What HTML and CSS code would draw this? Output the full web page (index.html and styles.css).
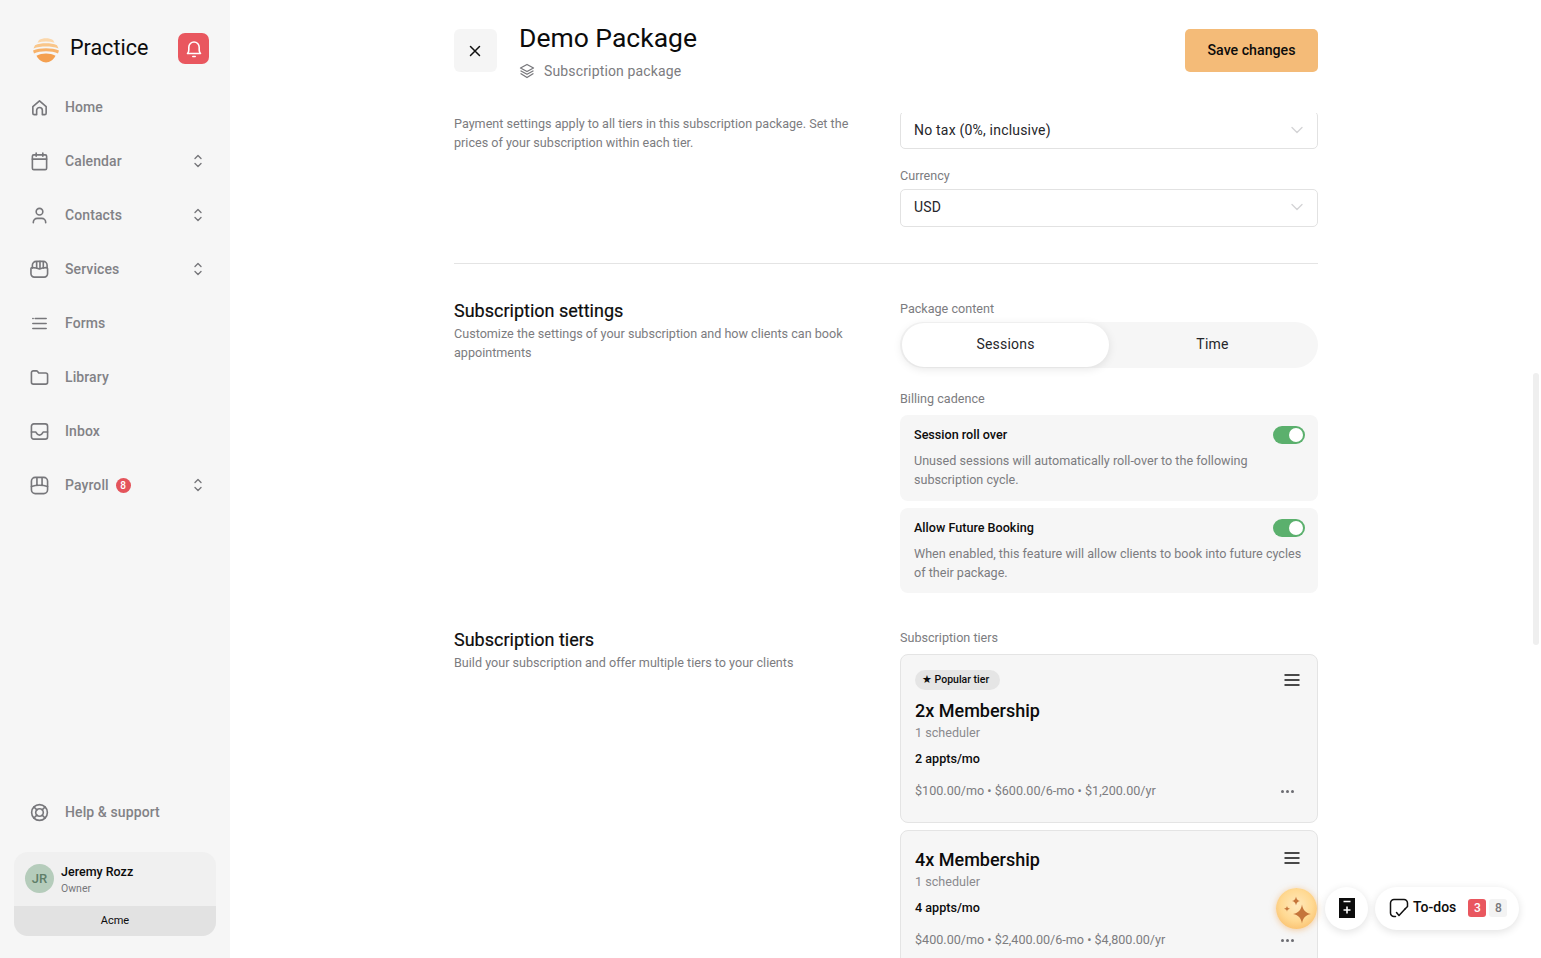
FILE: index.html
```html
<!DOCTYPE html>
<html lang="en">

<head>
    <meta charset="UTF-8">
    <meta name="viewport" content="width=device-width, initial-scale=1.0">
    <title>Demo Package</title>
    <link rel="stylesheet" href="styles.css">
</head>

<body>
    <aside class="sidebar">
        <div class="brand">
            <svg class="brand-logo" width="28" height="26" viewBox="0 0 28 26">
                <path d="M7 3C11 .8 17 .8 21 3L22.500 5.800C17 4 11 4 5.500 5.800Z" fill="#fbd7ab" />
                <path d="M3 8.200C9 5.600 19 5.600 25 8.200L26.500 11.400C19 8.800 9 8.800 1.500 11.400Z" fill="#f9c68a" />
                <path d="M1 13.600C8 10.600 20 10.600 27 13.600L26 16.600C20 13.600 8 13.600 2 16.600Z" fill="#f7b26a" />
                <path d="M4.500 18.800C10 15.800 18 15.800 23.500 18.800C21 23.500 17.500 25.500 14 25.500C10.500 25.500 7 23.500 4.500 18.800Z" fill="#f4a050" />
            </svg>
            <span class="brand-name">Practice</span>
            <button class="bell">
                <svg width="20" height="20" viewBox="0 0 20 20" fill="none" stroke="#fff" stroke-width="1.600"
                    stroke-linecap="round" stroke-linejoin="round">
                    <path d="M3.500 14.500h13c-.9-1-1.300-2-1.300-3.600V8.200a5.200 5.200 0 0 0-10.400 0v2.700c0 1.600-.4 2.600-1.300 3.600z" />
                    <path d="M8.800 17.500h2.400" />
                </svg>
            </button>
        </div>

        <nav class="nav">
            <a class="nav-item">
                <svg class="nav-icon" viewBox="0 0 20 20">
                    <path d="M3 9 10 3l7 6v7a1.500 1.500 0 0 1-1.500 1.500H13v-4.500a3 3 0 0 0-6 0v4.500H4.500A1.500 1.500 0 0 1 3 16z" />
                </svg>
                <span>Home</span>
            </a>
            <a class="nav-item">
                <svg class="nav-icon" viewBox="0 0 20 20">
                    <rect x="2.500" y="3" width="15" height="15.500" rx="1.500" />
                    <path d="M2.500 7.500h15M6.500 1v3.500M13.500 1v3.500" />
                </svg>
                <span>Calendar</span>
                <svg class="updown" viewBox="0 0 10 14">
                    <path d="M2 4.500 5 1.500 8 4.500M2 9.500 5 12.500 8 9.500" />
                </svg>
            </a>
            <a class="nav-item">
                <svg class="nav-icon" viewBox="0 0 20 20">
                    <circle cx="10" cy="6" r="3.500" />
                    <path d="M3.500 17.500v-.5a4 4 0 0 1 4-4h5a4 4 0 0 1 4 4v.5" />
                </svg>
                <span>Contacts</span>
                <svg class="updown" viewBox="0 0 10 14">
                    <path d="M2 4.500 5 1.500 8 4.500M2 9.500 5 12.500 8 9.500" />
                </svg>
            </a>
            <a class="nav-item">
                <svg class="nav-icon" viewBox="0 0 20 20">
                    <path d="M2.500 8.500V5.500a4 4 0 0 1 4-4h7.500a4 4 0 0 1 4 4v3" />
                    <path d="M1 9c0-1 .8-1 1.500-1 3 0 5.500.5 7.500 1.500 2-1 4.500-1.500 7-1.500 .7 0 1.500 0 1.500 1v5.500a3.500 3.500 0 0 1-3.500 3.500h-10.500A3.500 3.500 0 0 1 1 14.500z" />
                    <path d="M7 1.800v6.700M10.500 1.500v7.500M14 1.800v6.700" />
                </svg>
                <span>Services</span>
                <svg class="updown" viewBox="0 0 10 14">
                    <path d="M2 4.500 5 1.500 8 4.500M2 9.500 5 12.500 8 9.500" />
                </svg>
            </a>
            <a class="nav-item">
                <svg class="nav-icon" viewBox="0 0 20 20">
                    <path d="M5.500 4.700h11.500M3 10h14M3 15.300h14M3 4.700h.3" />
                </svg>
                <span>Forms</span>
            </a>
            <a class="nav-item">
                <svg class="nav-icon" viewBox="0 0 20 20">
                    <path d="M1.500 5A2 2 0 0 1 3.500 3h3.300a1.500 1.500 0 0 1 1.200.6L9.200 5.200h7.300a2 2 0 0 1 2 2v7.800a2 2 0 0 1-2 2h-13a2 2 0 0 1-2-2z" />
                </svg>
                <span>Library</span>
            </a>
            <a class="nav-item">
                <svg class="nav-icon" viewBox="0 0 20 20">
                    <rect x="1.500" y="2" width="17" height="16" rx="2.500" />
                    <path d="M1.500 10.500H6c.6 0 .8 3.300 4 3.300s3.400-3.300 4-3.300h4.500" />
                </svg>
                <span>Inbox</span>
            </a>
            <a class="nav-item">
                <svg class="nav-icon" viewBox="0 0 20 20">
                    <rect x="1.500" y="1.500" width="17" height="17" rx="4" />
                    <path d="M1.500 11c3-1 5.500-1.300 8.500-1.300s5.500.3 8.500 1.300M7.300 2v7.800M12.700 2v7.800" />
                </svg>
                <span>Payroll</span>
                <span class="nav-badge">8</span>
                <svg class="updown" viewBox="0 0 10 14">
                    <path d="M2 4.500 5 1.500 8 4.500M2 9.500 5 12.500 8 9.500" />
                </svg>
            </a>
        </nav>

        <a class="nav-item help">
            <svg class="nav-icon" viewBox="0 0 20 20">
                <circle cx="10" cy="10" r="8.300" />
                <circle cx="10" cy="10" r="4" />
                <path d="M4.200 4.200 7.200 7.200M15.800 4.200l-3 3M4.200 15.800l3-3M15.800 15.800l-3-3" />
            </svg>
            <span>Help &amp; support</span>
        </a>

        <div class="user-card">
            <div class="user-row">
                <div class="avatar">JR</div>
                <div class="user-text">
                    <div class="user-name">Jeremy Rozz</div>
                    <div class="user-role">Owner</div>
                </div>
            </div>
            <div class="user-org">Acme</div>
        </div>
    </aside>

    <main class="main">
        <header class="page-header">
            <button class="close-btn">
                <svg width="14" height="14" viewBox="0 0 14 14" fill="none" stroke="#111" stroke-width="1.500"
                    stroke-linecap="round">
                    <path d="M2.500 2.500l9 9M11.500 2.500l-9 9" />
                </svg>
            </button>
            <div class="title-block">
                <h1>Demo Package</h1>
                <div class="subtitle">
                    <svg width="16" height="16" viewBox="0 0 16 16" fill="none" stroke="#77777b" stroke-width="1.300"
                        stroke-linejoin="round" stroke-linecap="round">
                        <path d="M8 1.500 14.500 5 8 8.500 1.500 5z" />
                        <path d="M2 8l6 3.300L14 8M2 10.800l6 3.700 6-3.700" />
                    </svg>
                    <span>Subscription package</span>
                </div>
            </div>
            <button class="save-btn">Save changes</button>
        </header>

        <div class="content">
            <section class="section section-first">
                <div class="section-left">
                    <p class="section-desc pad-top">Payment settings apply to all tiers in this subscription package. Set the prices of your subscription within each tier.</p>
                </div>
                <div class="section-right">
                    <div class="select">
                        <span>No tax (0%, inclusive)</span>
                        <svg class="chevron" viewBox="0 0 12 8"><path d="M1 1.500 6 6.500 11 1.500" /></svg>
                    </div>
                    <label class="field-label label-spaced">Currency</label>
                    <div class="select select-tight">
                        <span>USD</span>
                        <svg class="chevron" viewBox="0 0 12 8"><path d="M1 1.500 6 6.500 11 1.500" /></svg>
                    </div>
                </div>
            </section>

            <hr class="divider">

            <section class="section section-settings">
                <div class="section-left">
                    <h2>Subscription settings</h2>
                    <p class="section-desc">Customize the settings of your subscription and how clients can book appointments</p>
                </div>
                <div class="section-right">
                    <label class="field-label">Package content</label>
                    <div class="segmented">
                        <div class="segment active">Sessions</div>
                        <div class="segment">Time</div>
                    </div>
                    <label class="field-label label-billing">Billing cadence</label>
                    <div class="option-card">
                        <div class="option-head">
                            <span class="option-title">Session roll over</span>
                            <span class="switch"></span>
                        </div>
                        <p class="option-desc">Unused sessions will automatically roll-over to the following subscription cycle.</p>
                    </div>
                    <div class="option-card">
                        <div class="option-head">
                            <span class="option-title">Allow Future Booking</span>
                            <span class="switch"></span>
                        </div>
                        <p class="option-desc">When enabled, this feature will allow clients to book into future cycles of their package.</p>
                    </div>
                </div>
            </section>

            <section class="section section-tiers">
                <div class="section-left">
                    <h2>Subscription tiers</h2>
                    <p class="section-desc">Build your subscription and offer multiple tiers to your clients</p>
                </div>
                <div class="section-right">
                    <label class="field-label label-tiers">Subscription tiers</label>
                    <div class="tier-card">
                        <div class="tier-top">
                            <span class="tier-pill">★ Popular tier</span>
                            <svg class="tier-menu" viewBox="0 0 16 12"><path d="M0.500 1h15M0.500 6h15M0.500 11h15" /></svg>
                        </div>
                        <div class="tier-name">2x Membership</div>
                        <div class="tier-meta">1 scheduler</div>
                        <div class="tier-appts">2 appts/mo</div>
                        <div class="tier-prices">
                            <span>$100.00/mo • $600.00/6-mo • $1,200.00/yr</span>
                            <span class="dots"><i></i><i></i><i></i></span>
                        </div>
                    </div>
                    <div class="tier-card tier-plain">
                        <div class="tier-top tier-top-plain">
                            <div class="tier-name">4x Membership</div>
                            <svg class="tier-menu" viewBox="0 0 16 12"><path d="M0.500 1h15M0.500 6h15M0.500 11h15" /></svg>
                        </div>
                        <div class="tier-meta">1 scheduler</div>
                        <div class="tier-appts">4 appts/mo</div>
                        <div class="tier-prices">
                            <span>$400.00/mo • $2,400.00/6-mo • $4,800.00/yr</span>
                            <span class="dots"><i></i><i></i><i></i></span>
                        </div>
                    </div>
                </div>
            </section>
        </div>

        <div class="scroll-thumb"></div>

        <div class="floating">
            <button class="float-spark">
                <svg width="34" height="34" viewBox="0 0 34 34" fill="#c5753b">
                    <path d="M22 12.500C23 18 25 20.500 31 22 25 23.500 23 26 22 31.500 21 26 19 23.500 13 22 19 20.500 21 18 22 12.500z" />
                    <path d="M16 4.500C16.500 7.300 17.500 8.500 20 9 17.500 9.500 16.500 10.700 16 13.500 15.500 10.700 14.500 9.500 12 9 14.500 8.500 15.500 7.300 16 4.500z" />
                    <path d="M7 13.800C7.300 15.600 7.900 16.200 10 16.800 7.900 17.400 7.300 18 7 19.800 6.700 18 6.100 17.400 4 16.800 6.100 16.200 6.700 15.600 7 13.800z" />
                </svg>
            </button>
            <button class="float-round">
                <svg width="16" height="20" viewBox="0 0 16 20">
                    <rect width="16" height="20" fill="#0c0c0c" />
                    <path d="M4.500 3.500h7M8 8.500v7M4.500 12h7" stroke="#fff" stroke-width="1.600" fill="none" />
                </svg>
            </button>
            <button class="float-todos">
                <svg width="20" height="20" viewBox="0 0 20 20" fill="none" stroke="#111" stroke-width="1.500"
                    stroke-linecap="round" stroke-linejoin="round">
                    <path d="M6.500 18.500H5A3.500 3.500 0 0 1 1.500 15V5A3.500 3.500 0 0 1 5 1.500h10A3.500 3.500 0 0 1 18.500 5v3.500L16 11" />
                    <path d="M7.500 14.500l2.500 3 6-6.500" />
                </svg>
                <span class="todos-label">To-dos</span>
                <span class="count count-red">3</span>
                <span class="count count-grey">8</span>
            </button>
        </div>
    </main>
</body>

</html>
```

FILE: styles.css
```css
* {
    box-sizing: border-box;
}

html,
body {
    height: 100%;
}

body {
    margin: 0;
    display: flex;
    overflow: hidden;
    font-family: Roboto, Arial, sans-serif;
    color: #0c0c0c;
    background-color: #fff;
}

button {
    font-family: inherit;
    border: none;
    cursor: pointer;
}

/* Sidebar */
.sidebar {
    width: 230px;
    flex-shrink: 0;
    display: flex;
    flex-direction: column;
    padding: 33px 14px 22px;
    background-color: #f6f6f6;
}

.brand {
    display: flex;
    align-items: center;
    height: 31px;
    margin-bottom: 16px;
    padding-left: 18px;
}

.brand-logo {
    flex-shrink: 0;
    margin-top: 2px;
}

.brand-name {
    margin-left: 10px;
    margin-top: -2px;
    font-size: 21.500px;
}

.bell {
    display: flex;
    align-items: center;
    justify-content: center;
    width: 31px;
    height: 31px;
    margin-left: auto;
    margin-right: 7px;
    padding: 0;
    border-radius: 7px;
    background-color: #e9575f;
}

.nav-item {
    display: flex;
    align-items: center;
    height: 54px;
    padding-left: 16px;
    padding-right: 13px;
    font-size: 14px;
    font-weight: 500;
    color: #828286;
    letter-spacing: 0.1px;
}

.nav-icon {
    width: 19px;
    height: 19px;
    margin-right: 16px;
    flex-shrink: 0;
    fill: none;
    stroke: #77777b;
    stroke-width: 1.700;
    stroke-linecap: round;
    stroke-linejoin: round;
}

.updown {
    width: 10px;
    height: 14px;
    margin-left: auto;
    fill: none;
    stroke: #77777b;
    stroke-width: 1.400;
    stroke-linecap: round;
    stroke-linejoin: round;
}

.nav-badge {
    display: flex;
    align-items: center;
    justify-content: center;
    width: 15px;
    height: 15px;
    margin-left: 7px;
    border-radius: 50%;
    font-size: 10px;
    color: #fff;
    background-color: #e4545b;
}

.help {
    margin-top: auto;
    margin-bottom: 13px;
}

.user-card {
    height: 84px;
    border-radius: 14px;
    overflow: hidden;
    background-color: #f0f0f0;
}

.user-row {
    display: flex;
    align-items: center;
    height: 54px;
    padding: 0 11px 1px;
    gap: 7px;
}

.avatar {
    display: flex;
    align-items: center;
    justify-content: center;
    width: 29px;
    height: 29px;
    border-radius: 50%;
    font-size: 13px;
    font-weight: 500;
    color: #5f7e68;
    background-color: #b5ccbb;
}

.user-text {
    padding-top: 4px;
}

.user-name {
    font-size: 12.500px;
    font-weight: 500;
    line-height: 16px;
}

.user-role {
    font-size: 10.500px;
    line-height: 18px;
    color: #77777b;
}

.user-org {
    height: 30px;
    line-height: 29px;
    text-align: center;
    font-size: 11px;
    background-color: #e2e2e2;
}

/* Main column */
.main {
    position: relative;
    flex: 1;
    min-width: 0;
    display: flex;
    flex-direction: column;
    align-items: center;
    height: 100%;
    padding-left: 1px;
    overflow: hidden;
}

.page-header {
    width: 864px;
    height: 113px;
    flex-shrink: 0;
    display: flex;
    align-items: flex-start;
    padding-top: 21px;
}

.close-btn {
    display: flex;
    align-items: center;
    justify-content: center;
    width: 43px;
    height: 43px;
    margin-top: 8px;
    padding: 0 2px 0 0;
    border-radius: 6px;
    background-color: #f5f5f5;
}

.title-block {
    margin-left: 22px;
}

h1 {
    margin: 0;
    font-size: 26.500px;
    font-weight: 400;
    line-height: 33px;
}

.subtitle {
    display: flex;
    align-items: center;
    gap: 9px;
    margin-top: 9px;
    font-size: 14px;
    font-weight: 400;
    letter-spacing: 0.15px;
    color: #7c7c80;
}

.save-btn {
    width: 133px;
    height: 43px;
    margin-top: 8px;
    margin-left: auto;
    padding: 0 0 2px;
    border-radius: 5px;
    font-size: 14.200px;
    font-weight: 500;
    color: #0c0c0c;
    background-color: #f4bb78;
}

.content {
    width: 864px;
    flex: 1;
    min-height: 0;
    overflow: hidden;
}

.section {
    display: grid;
    grid-template-columns: 1fr 418px;
    column-gap: 46px;
}

.section-first {
    margin-top: -2px;
    padding-bottom: 36px;
}

.section-settings {
    padding-top: 36px;
}

.section-tiers {
    padding-top: 36px;
}

.divider {
    margin: 0;
    border: none;
    border-top: 1px solid #e4e4e4;
}

h2 {
    margin: 0;
    font-size: 18px;
    font-weight: 400;
    line-height: 21px;
    -webkit-text-stroke: 0.2px #0c0c0c;
}

.section-desc {
    margin: 3px 0 0;
    font-size: 12.600px;
    line-height: 19px;
    color: #7c7c80;
}

.pad-top {
    margin-top: 3px;
}

.field-label {
    display: block;
    height: 16px;
    margin-bottom: 6px;
    font-size: 12.600px;
    line-height: 18px;
    color: #7c7c80;
}

.label-spaced {
    margin-top: 18px;
}

.label-billing {
    margin-top: 22px;
    margin-bottom: 9px;
}

.label-tiers {
    margin-bottom: 9px;
}

.select {
    display: flex;
    align-items: center;
    justify-content: space-between;
    height: 38px;
    padding: 0 14px 0 13px;
    border: 1px solid #e2e2e2;
    border-radius: 5px;
    font-size: 14px;
    letter-spacing: 0.2px;
    color: #26262a;
}

.select-tight {
    padding-bottom: 2px;
}

.chevron {
    width: 12px;
    height: 8px;
    fill: none;
    stroke: #d4d4d6;
    stroke-width: 1.400;
    stroke-linecap: round;
    stroke-linejoin: round;
}

.segmented {
    display: flex;
    height: 46px;
    padding: 1px 2px;
    border-radius: 23px;
    background-color: #f6f6f6;
}

.segment {
    flex: 1;
    display: flex;
    align-items: center;
    justify-content: center;
    padding-bottom: 2px;
    border-radius: 22px;
    font-size: 14px;
    letter-spacing: 0.2px;
    color: #26262a;
}

.segment.active {
    background-color: #fff;
    box-shadow: 0 2px 10px rgba(0, 0, 0, 0.1);
}

.option-card {
    height: 86px;
    margin-bottom: 7px;
    padding: 11px 13px 0 14px;
    border-radius: 8px;
    background-color: #f6f6f6;
}

.option-card:last-child {
    height: 85px;
    margin-bottom: 0;
}

.option-head {
    display: flex;
    align-items: flex-start;
    justify-content: space-between;
    height: 22px;
}

.option-title {
    font-size: 12.600px;
    font-weight: 500;
    line-height: 17px;
}

.switch {
    position: relative;
    width: 32px;
    height: 18px;
    border-radius: 9px;
    background-color: #5bb06d;
}

.switch::after {
    content: "";
    position: absolute;
    top: 2px;
    right: 2px;
    width: 14px;
    height: 14px;
    border-radius: 50%;
    background-color: #fff;
}

.option-desc {
    margin: 3px 0 0;
    font-size: 12.600px;
    line-height: 19px;
    color: #7c7c80;
}

.tier-card {
    height: 169px;
    margin-bottom: 7px;
    padding: 15px 14px 0;
    border: 1px solid #e4e4e4;
    border-radius: 8px;
    background-color: #f6f6f6;
}

.tier-plain {
    padding-top: 18px;
}

.tier-top {
    display: flex;
    align-items: flex-start;
    justify-content: space-between;
    height: 30px;
}

.tier-top-plain {
    height: 21px;
}

.tier-pill {
    display: inline-block;
    height: 20px;
    padding: 0 11px 0 7px;
    border-radius: 10px;
    font-size: 10.500px;
    font-weight: 500;
    line-height: 19px;
    background-color: #e5e5e5;
}

.tier-menu {
    width: 16px;
    height: 12px;
    margin: 4px 3px 0 0;
    fill: none;
    stroke: #111;
    stroke-width: 1.600;
}

.tier-top-plain .tier-menu {
    margin-top: 3px;
}

.tier-name {
    font-size: 18px;
    font-weight: 500;
    line-height: 21px;
}

.tier-meta {
    margin-top: 3px;
    font-size: 12.600px;
    line-height: 18px;
    color: #8a8a8e;
}

.tier-appts {
    margin-top: 8px;
    font-size: 12.600px;
    font-weight: 500;
    line-height: 18px;
}

.tier-prices {
    display: flex;
    align-items: center;
    justify-content: space-between;
    margin-top: 14px;
    padding-right: 9px;
    font-size: 12.600px;
    line-height: 18px;
    color: #7c7c80;
}

.dots {
    display: flex;
    gap: 2px;
}

.dots i {
    width: 3px;
    height: 3px;
    border-radius: 50%;
    background-color: #6c6c72;
}

.scroll-thumb {
    position: absolute;
    top: 373px;
    right: 2px;
    width: 6px;
    height: 272px;
    border-radius: 3px;
    background-color: #efefef;
}

/* Floating actions */
.floating {
    position: absolute;
    right: 22px;
    bottom: 28px;
    display: flex;
    align-items: center;
    gap: 7px;
}

.float-spark {
    display: flex;
    align-items: center;
    justify-content: center;
    width: 41px;
    height: 41px;
    margin-right: 1px;
    padding: 0;
    border-radius: 50%;
    background: radial-gradient(circle at 50% 42%, #ffe9bd 0%, #ffd992 50%, #f7b25a 100%);
    box-shadow: 0 1px 6px rgba(240, 160, 70, 0.5);
}

.float-round {
    display: flex;
    align-items: center;
    justify-content: center;
    width: 43px;
    height: 43px;
    padding: 0 0 2px;
    border-radius: 50%;
    background-color: #fff;
    box-shadow: 0 2px 8px rgba(0, 0, 0, 0.12);
}

.float-todos {
    display: flex;
    align-items: center;
    width: 144px;
    height: 43px;
    padding: 0 0 2px 14px;
    border-radius: 22px;
    background-color: #fff;
    box-shadow: 0 2px 8px rgba(0, 0, 0, 0.12);
}

.todos-label {
    margin: -2px 12px 0 4px;
    font-size: 14px;
    font-weight: 500;
    color: #0c0c0c;
}

.count {
    display: flex;
    align-items: center;
    justify-content: center;
    width: 18px;
    height: 18px;
    border-radius: 3px;
    font-size: 12px;
    font-weight: 500;
}

.count-red {
    margin-right: 3px;
    color: #fff;
    background-color: #e9575f;
}

.count-grey {
    color: #77777b;
    background-color: #f3f3f3;
}
```
